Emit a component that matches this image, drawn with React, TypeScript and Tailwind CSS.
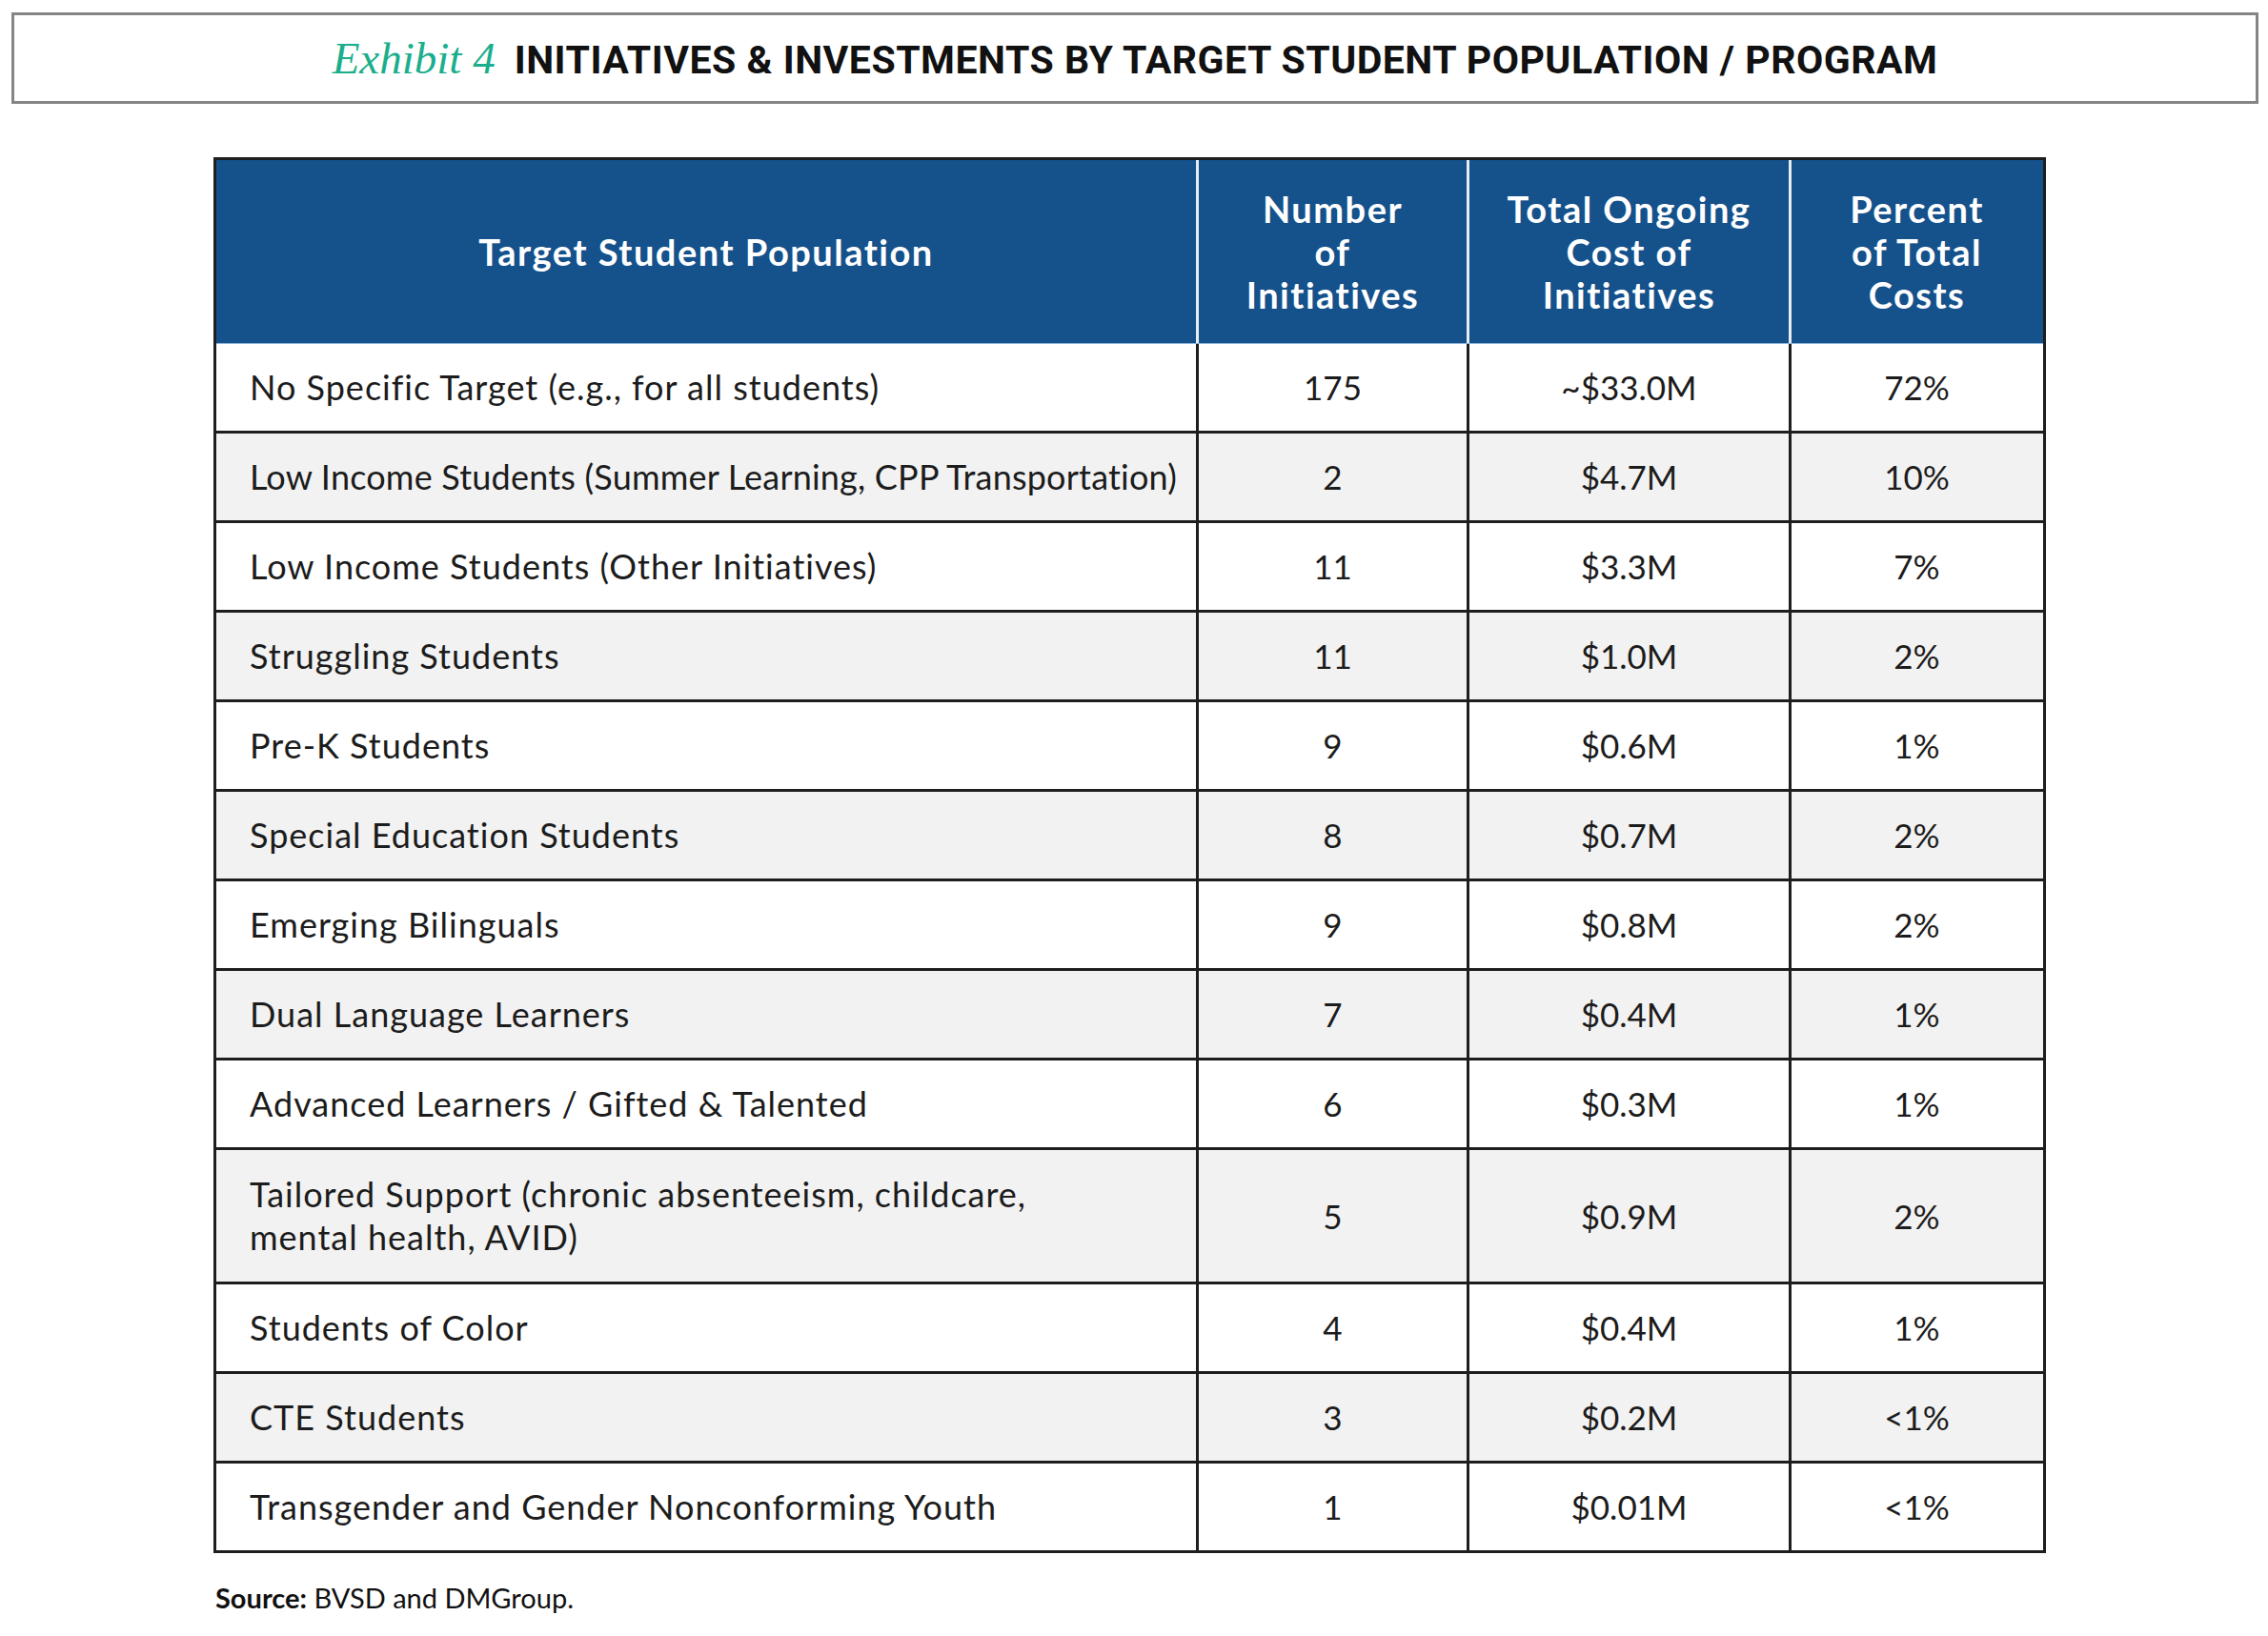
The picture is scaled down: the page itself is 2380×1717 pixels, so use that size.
import React from "react";

type Row = { label: React.ReactNode; n: string; cost: string; pct: string; tall?: boolean; tight?: boolean };

const rows: Row[] = [
  { label: "No Specific Target (e.g., for all students)", n: "175", cost: "~$33.0M", pct: "72%" },
  { label: "Low Income Students (Summer Learning, CPP Transportation)", n: "2", cost: "$4.7M", pct: "10%", tight: true },
  { label: "Low Income Students (Other Initiatives)", n: "11", cost: "$3.3M", pct: "7%" },
  { label: "Struggling Students", n: "11", cost: "$1.0M", pct: "2%" },
  { label: "Pre-K Students", n: "9", cost: "$0.6M", pct: "1%" },
  { label: "Special Education Students", n: "8", cost: "$0.7M", pct: "2%" },
  { label: "Emerging Bilinguals", n: "9", cost: "$0.8M", pct: "2%" },
  { label: "Dual Language Learners", n: "7", cost: "$0.4M", pct: "1%" },
  { label: "Advanced Learners / Gifted & Talented", n: "6", cost: "$0.3M", pct: "1%" },
  {
    label: (
      <>
        Tailored Support (chronic absenteeism, childcare,
        <br />
        mental health, AVID)
      </>
    ),
    n: "5",
    cost: "$0.9M",
    pct: "2%",
    tall: true,
  },
  { label: "Students of Color", n: "4", cost: "$0.4M", pct: "1%" },
  { label: "CTE Students", n: "3", cost: "$0.2M", pct: "<1%" },
  { label: "Transgender and Gender Nonconforming Youth", n: "1", cost: "$0.01M", pct: "<1%" },
];

export default function App() {
  return (
    <div
      className="w-[2380px] h-[1717px] bg-white overflow-hidden"
      style={{ fontFamily: "Lato, 'Liberation Sans', sans-serif" }}
    >
      {/* Title box */}
      <div className="ml-[12px] mt-[13px] w-[2358px] h-[96px] border-[3px] border-[#858585] flex items-center justify-center">
        <div className="flex items-baseline">
          <span
            className="italic text-[#1bae8c] text-[47px] leading-none"
            style={{ fontFamily: "'Liberation Serif', serif" }}
          >
            Exhibit 4
          </span>
          <span
            className="ml-[20px] text-[41px] leading-none font-bold text-[#111] tracking-[0.5px]"
            style={{ fontFamily: "Roboto, 'Liberation Sans', sans-serif" }}
          >
            INITIATIVES &amp; INVESTMENTS BY TARGET STUDENT POPULATION / PROGRAM
          </span>
        </div>
      </div>

      {/* Table */}
      <div className="ml-[224px] mt-[56px] w-[1923px] border-[3px] border-[#1e1e1e] text-[35px] text-[#1c1c1c]">
        {/* Header */}
        <div className="flex h-[193px] bg-[#15518b] text-white font-bold text-[38px] tracking-[1.5px] leading-[45px] border-b border-[#8eb3da]">
          <div className="w-[1028px] flex items-center justify-center">Target Student Population</div>
          <div className="w-[284px] border-l-[3px] border-[#e6edf5] flex items-center justify-center text-center">
            Number
            <br />
            of
            <br />
            Initiatives
          </div>
          <div className="w-[338px] border-l-[3px] border-[#e6edf5] flex items-center justify-center text-center">
            Total Ongoing
            <br />
            Cost of
            <br />
            Initiatives
          </div>
          <div className="w-[266px] border-l-[3px] border-[#e6edf5] flex items-center justify-center text-center">
            Percent
            <br />
            of Total
            <br />
            Costs
          </div>
        </div>

        {rows.map((r, i) => (
          <div
            key={i}
            className={
              "flex leading-[45px] " +
              (i === 0 ? "" : "border-t-[3px] border-[#1e1e1e] ") +
              (i % 2 === 1 ? "bg-[#f2f2f2] " : "bg-white ") +
              (r.tall ? "h-[141px]" : i === 0 ? "h-[91px]" : "h-[94px]")
            }
          >
            <div
              className={
                "w-[1028px] flex items-center pl-[35px] text-[36px] whitespace-nowrap " +
                (r.tight ? "tracking-[0.2px]" : "tracking-[1px]")
              }
            >
              <div>{r.label}</div>
            </div>
            <div className="w-[284px] border-l-[3px] border-[#1e1e1e] flex items-center justify-center">{r.n}</div>
            <div className="w-[338px] border-l-[3px] border-[#1e1e1e] flex items-center justify-center">{r.cost}</div>
            <div className="w-[266px] border-l-[3px] border-[#1e1e1e] flex items-center justify-center">{r.pct}</div>
          </div>
        ))}
      </div>

      {/* Source */}
      <div className="ml-[226px] mt-[30px] text-[29px] leading-[34px] text-[#111]">
        <span className="font-bold">Source:</span> BVSD and DMGroup.
      </div>
    </div>
  );
}
